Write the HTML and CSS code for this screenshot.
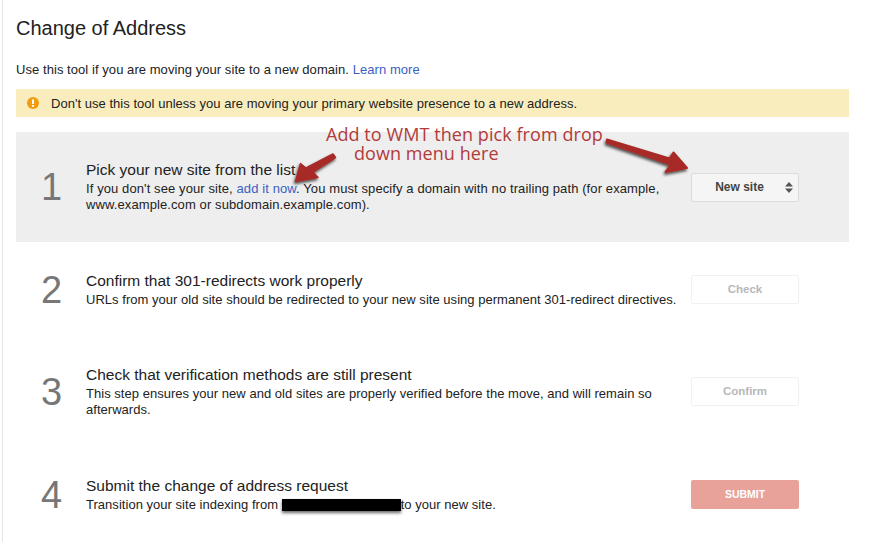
FILE: index.html
```html
<!DOCTYPE html>
<html lang="en">
<head>
<meta charset="utf-8">
<title>Change of Address</title>
<link rel="stylesheet" href="styles.css">
</head>
<body>
<main class="page">
  <h1 class="title">Change of Address</h1>
  <p class="intro">Use this tool if you are moving your site to a new domain. <a href="#">Learn more</a></p>
  <div class="notice">
    <svg class="notice-icon" viewBox="0 0 12 12" width="12" height="12"><circle cx="6" cy="6" r="6" fill="#f39c0f"/><rect x="5" y="2.400" width="2" height="4.600" fill="#fff"/><rect x="5" y="8" width="2" height="1.800" fill="#fff"/></svg>
    <span>Don't use this tool unless you are moving your primary website presence to a new address.</span>
  </div>
  <div class="steps">
    <section class="step step-active">
      <div class="num">1</div>
      <div class="body">
        <h2>Pick your new site from the list</h2>
        <p>If you don't see your site, <a href="#">add it now</a>. You must specify a domain with no trailing path (for example, www.example.com or subdomain.example.com).</p>
      </div>
      <button class="btn btn-select" type="button">New site
        <svg class="updown" viewBox="0 0 8 11" width="8" height="11"><path d="M4 0 8 4.400H0Z M0 6.600H8L4 11Z" fill="#555"/></svg>
      </button>
    </section>
    <section class="step">
      <div class="num">2</div>
      <div class="body">
        <h2>Confirm that 301-redirects work properly</h2>
        <p>URLs from your old site should be redirected to your new site using permanent 301-redirect directives.</p>
      </div>
      <button class="btn btn-off" type="button">Check</button>
    </section>
    <section class="step">
      <div class="num">3</div>
      <div class="body">
        <h2>Check that verification methods are still present</h2>
        <p>This step ensures your new and old sites are properly verified before the move, and will remain so afterwards.</p>
      </div>
      <button class="btn btn-off" type="button">Confirm</button>
    </section>
    <section class="step">
      <div class="num">4</div>
      <div class="body">
        <h2>Submit the change of address request</h2>
        <p>Transition your site indexing from <span class="redact"></span>to your new site.</p>
      </div>
      <button class="btn btn-submit" type="button">SUBMIT</button>
    </section>
  </div>
</main>
<div class="note"><div>Add to WMT then pick from drop</div><div class="note-second">down menu here</div></div>
<svg class="arrows" viewBox="0 0 869 547" width="869" height="547">
  <defs>
    <filter id="sh" x="-30%" y="-30%" width="160%" height="160%"><feDropShadow dx="-1" dy="2" stdDeviation="1.500" flood-color="#000" flood-opacity=".7"/></filter>
  </defs>
  <g fill="#a82a27" filter="url(#sh)">
    <path d="M333 154 L335.500 157.500 L313 172 L318 177.500 L295.500 181.500 L300.500 163.500 L306 168 Z" stroke="#a82a27" stroke-width="1.500" stroke-linejoin="round"/>
    <path d="M607 139.500 L606.500 142.500 L671 164.500 L665.500 172 L687 168 L673.500 152.500 L669.500 158.500 Z" stroke="#a82a27" stroke-width="2" stroke-linejoin="round"/>
  </g>
</svg>
</body>
</html>
```
FILE: styles.css
```css
html, body { margin: 0; padding: 0; background: #fff; }
body {
  width: 869px;
  height: 547px;
  overflow: hidden;
  position: relative;
  font-family: "Liberation Sans", Arial, sans-serif;
  color: #222;
}
.page {
  box-sizing: border-box;
  width: 847px;
  height: 542px;
  margin-left: 2px;
  padding-left: 13px;
  border-left: 1px solid #e5e5e5;
  overflow: hidden;
}
.title {
  margin: 0;
  padding-top: 17px;
  font-size: 20px;
  line-height: 23px;
  font-weight: 400;
}
.intro {
  margin: 22px 0 0;
  font-size: 13px;
  line-height: 15px;
  letter-spacing: .06px;
}
a { color: #3b5fc4; text-decoration: none; }
.notice {
  display: flex;
  align-items: center;
  gap: 12px;
  height: 28px;
  margin-top: 12px;
  padding-left: 11px;
  background: #f9edbe;
  font-size: 13px;
  letter-spacing: .03px;
}
.notice-icon { flex: none; }
.steps {
  display: grid;
  grid-template-rows: 110px 95px 109px 97px;
  margin-top: 15px;
}
.step {
  display: flex;
  align-items: center;
  padding-left: 25px;
  padding-right: 50px;
}
.step-active { background: #eee; }
.num {
  width: 45px;
  flex: none;
  font-size: 38px;
  line-height: 44px;
  color: #777;
}
.body { width: 592px; flex: none; }
.body h2 {
  margin: 0;
  font-size: 15.500px;
  line-height: 18px;
  font-weight: 400;
  color: #222;
}
.body p {
  margin: 2px 0 0;
  font-size: 13px;
  line-height: 16px;
  letter-spacing: .03px;
}
.step-active .body p { letter-spacing: .1px; }
.redact {
  display: inline-block;
  width: 119px;
  height: 12px;
  vertical-align: -2px;
  background: #000;
  box-shadow: 0 2px 3px rgba(0, 0, 0, .6);
}
.btn {
  box-sizing: border-box;
  position: relative;
  width: 108px;
  height: 29px;
  margin-left: auto;
  padding: 0 0 2px;
  border-radius: 2px;
  font-family: inherit;
  font-size: 11.500px;
  font-weight: 700;
}
.btn-select {
  border: 1px solid #dcdcdc;
  background: #f5f5f5;
  color: #444;
  font-size: 12px;
  text-align: center;
  padding: 0 11px 0 0;
}
.updown { position: absolute; right: 5px; top: 8px; }
.btn-off {
  border: 1px solid #f1f1f1;
  background: #fff;
  color: #b8b8b8;
}
.btn-submit {
  border: 0;
  background: #e8a299;
  color: #fff;
  font-size: 10.500px;
}
.note {
  position: absolute;
  left: 326px;
  top: 125px;
  font-family: "Open Sans", sans-serif;
  font-size: 18px;
  line-height: 18.500px;
  letter-spacing: .07px;
  color: #b23b3b;
  white-space: nowrap;
}
.note-second { margin-left: 28px; }
.arrows { position: absolute; left: 0; top: 0; pointer-events: none; }
```
